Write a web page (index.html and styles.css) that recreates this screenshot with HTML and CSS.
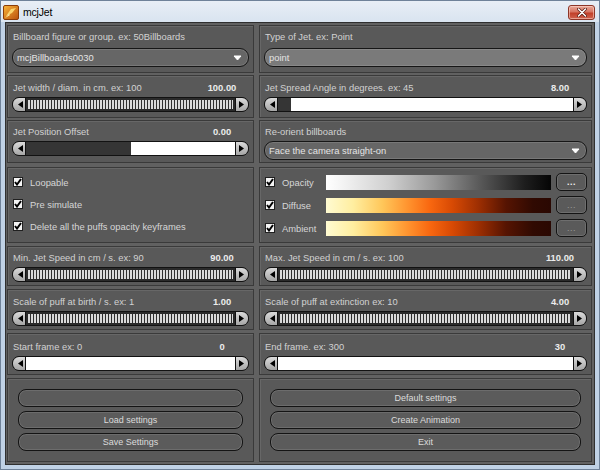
FILE: index.html
```html
<!DOCTYPE html>
<html>
<head>
<meta charset="utf-8">
<title>mcjJet</title>
<link rel="stylesheet" href="styles.css">
</head>
<body>
<div class="window">
  <div class="titlebar">
    <svg class="appicon" width="16" height="15" viewBox="0 0 16 15">
      <defs>
        <linearGradient id="ig" x1="0" y1="0" x2="1" y2="1">
          <stop offset="0" stop-color="#f9b53a"/>
          <stop offset="1" stop-color="#b9500c"/>
        </linearGradient>
      </defs>
      <rect x="0.5" y="0.5" width="15" height="14" rx="1.5" fill="url(#ig)" stroke="#8a3c08"/>
      <path d="M3 11 L8 4 L13 3 L9 8 Z" fill="#ffe27a" opacity="0.85"/>
      <path d="M2 13 L6 9 L7 10 Z" fill="#fff1b0"/>
    </svg>
    <span class="title">mcjJet</span>
    <div class="close">
      <svg width="10" height="9" viewBox="0 0 10 9"><path d="M1.5 1 L8.5 8 M8.5 1 L1.5 8" stroke="#5a1a10" stroke-width="3" stroke-linecap="round"/><path d="M1.5 1 L8.5 8 M8.5 1 L1.5 8" stroke="#ffffff" stroke-width="1.6" stroke-linecap="round"/></svg>
    </div>
  </div>

  <div class="content">
    <!-- Row 1 -->
    <div class="row r1">
      <div class="panel pad-drop">
        <div class="label"><span>Billboard figure or group. ex: 50Billboards</span></div>
        <div class="select"><span>mcjBillboards0030</span><svg class="arrow" width="9" height="6" viewBox="0 0 9 6"><path d="M1 1 H8 L4.5 5 Z" fill="#ffffff" stroke="#ffffff" stroke-linejoin="round"/></svg></div>
      </div>
      <div class="panel pad-drop">
        <div class="label"><span>Type of Jet. ex: Point</span></div>
        <div class="select light"><span>point</span><svg class="arrow" width="9" height="6" viewBox="0 0 9 6"><path d="M1 1 H8 L4.5 5 Z" fill="#ffffff" stroke="#ffffff" stroke-linejoin="round"/></svg></div>
      </div>
    </div>

    <!-- Row 2 -->
    <div class="row r2">
      <div class="panel pad6">
        <div class="label"><span>Jet width / diam. in cm. ex: 100</span><b class="val">100.00</b></div>
        <div class="slider"><span class="cap left"><svg width="5" height="7" viewBox="0 0 5 7"><path d="M5 0 V7 L0 3.5 Z" fill="#000"/></svg></span><span class="track ribbed"></span><span class="cap right"><svg width="5" height="7" viewBox="0 0 5 7"><path d="M0 0 V7 L5 3.5 Z" fill="#000"/></svg></span></div>
      </div>
      <div class="panel pad6">
        <div class="label"><span>Jet Spread Angle in degrees. ex: 45</span><b class="val">8.00</b></div>
        <div class="slider"><span class="cap left"><svg width="5" height="7" viewBox="0 0 5 7"><path d="M5 0 V7 L0 3.5 Z" fill="#000"/></svg></span><span class="track white"><span class="fill" style="width:13px"></span></span><span class="cap right"><svg width="5" height="7" viewBox="0 0 5 7"><path d="M0 0 V7 L5 3.5 Z" fill="#000"/></svg></span></div>
      </div>
    </div>

    <!-- Row 3 -->
    <div class="row r3">
      <div class="panel pad5">
        <div class="label"><span>Jet Position Offset</span><b class="val">0.00</b></div>
        <div class="slider"><span class="cap left"><svg width="5" height="7" viewBox="0 0 5 7"><path d="M5 0 V7 L0 3.5 Z" fill="#000"/></svg></span><span class="track white"><span class="fill" style="width:50%"></span></span><span class="cap right"><svg width="5" height="7" viewBox="0 0 5 7"><path d="M0 0 V7 L5 3.5 Z" fill="#000"/></svg></span></div>
      </div>
      <div class="panel pad5">
        <div class="label"><span>Re-orient billboards</span></div>
        <div class="select"><span>Face the camera straight-on</span><svg class="arrow" width="9" height="6" viewBox="0 0 9 6"><path d="M1 1 H8 L4.5 5 Z" fill="#ffffff" stroke="#ffffff" stroke-linejoin="round"/></svg></div>
      </div>
    </div>

    <!-- Row 4 -->
    <div class="row r4">
      <div class="panel checks">
        <div class="check"><span class="box"><svg width="8" height="8" viewBox="0 0 8 8"><path d="M1 4 L3 6.5 L7 1" fill="none" stroke="#000" stroke-width="2"/></svg></span><span>Loopable</span></div>
        <div class="check"><span class="box"><svg width="8" height="8" viewBox="0 0 8 8"><path d="M1 4 L3 6.5 L7 1" fill="none" stroke="#000" stroke-width="2"/></svg></span><span>Pre simulate</span></div>
        <div class="check"><span class="box"><svg width="8" height="8" viewBox="0 0 8 8"><path d="M1 4 L3 6.5 L7 1" fill="none" stroke="#000" stroke-width="2"/></svg></span><span>Delete all the puffs opacity keyframes</span></div>
      </div>
      <div class="panel ramps">
        <div class="ramp-row">
          <span class="box"><svg width="8" height="8" viewBox="0 0 8 8"><path d="M1 4 L3 6.5 L7 1" fill="none" stroke="#000" stroke-width="2"/></svg></span>
          <span class="rlabel">Opacity</span>
          <span class="bar opacity"></span>
          <span class="dots strong">...</span>
        </div>
        <div class="ramp-row">
          <span class="box"><svg width="8" height="8" viewBox="0 0 8 8"><path d="M1 4 L3 6.5 L7 1" fill="none" stroke="#000" stroke-width="2"/></svg></span>
          <span class="rlabel">Diffuse</span>
          <span class="bar fire"></span>
          <span class="dots">...</span>
        </div>
        <div class="ramp-row">
          <span class="box"><svg width="8" height="8" viewBox="0 0 8 8"><path d="M1 4 L3 6.5 L7 1" fill="none" stroke="#000" stroke-width="2"/></svg></span>
          <span class="rlabel">Ambient</span>
          <span class="bar fire"></span>
          <span class="dots">...</span>
        </div>
      </div>
    </div>

    <!-- Row 5 -->
    <div class="row r5">
      <div class="panel pad5">
        <div class="label"><span>Min. Jet Speed in cm / s. ex: 90</span><b class="val">90.00</b></div>
        <div class="slider"><span class="cap left"><svg width="5" height="7" viewBox="0 0 5 7"><path d="M5 0 V7 L0 3.5 Z" fill="#000"/></svg></span><span class="track ribbed"></span><span class="cap right"><svg width="5" height="7" viewBox="0 0 5 7"><path d="M0 0 V7 L5 3.5 Z" fill="#000"/></svg></span></div>
      </div>
      <div class="panel pad5">
        <div class="label"><span>Max. Jet Speed in cm / s. ex: 100</span><b class="val">110.00</b></div>
        <div class="slider"><span class="cap left"><svg width="5" height="7" viewBox="0 0 5 7"><path d="M5 0 V7 L0 3.5 Z" fill="#000"/></svg></span><span class="track ribbed"></span><span class="cap right"><svg width="5" height="7" viewBox="0 0 5 7"><path d="M0 0 V7 L5 3.5 Z" fill="#000"/></svg></span></div>
      </div>
    </div>

    <!-- Row 6 -->
    <div class="row r6">
      <div class="panel pad6">
        <div class="label"><span>Scale of puff at birth / s. ex: 1</span><b class="val">1.00</b></div>
        <div class="slider"><span class="cap left"><svg width="5" height="7" viewBox="0 0 5 7"><path d="M5 0 V7 L0 3.5 Z" fill="#000"/></svg></span><span class="track ribbed"></span><span class="cap right"><svg width="5" height="7" viewBox="0 0 5 7"><path d="M0 0 V7 L5 3.5 Z" fill="#000"/></svg></span></div>
      </div>
      <div class="panel pad6">
        <div class="label"><span>Scale of puff at extinction ex: 10</span><b class="val">4.00</b></div>
        <div class="slider"><span class="cap left"><svg width="5" height="7" viewBox="0 0 5 7"><path d="M5 0 V7 L0 3.5 Z" fill="#000"/></svg></span><span class="track ribbed"></span><span class="cap right"><svg width="5" height="7" viewBox="0 0 5 7"><path d="M0 0 V7 L5 3.5 Z" fill="#000"/></svg></span></div>
      </div>
    </div>

    <!-- Row 7 -->
    <div class="row r7">
      <div class="panel pad7">
        <div class="label"><span>Start frame ex: 0</span><b class="val">0</b></div>
        <div class="slider"><span class="cap left"><svg width="5" height="7" viewBox="0 0 5 7"><path d="M5 0 V7 L0 3.5 Z" fill="#000"/></svg></span><span class="track white"></span><span class="cap right"><svg width="5" height="7" viewBox="0 0 5 7"><path d="M0 0 V7 L5 3.5 Z" fill="#000"/></svg></span></div>
      </div>
      <div class="panel pad7">
        <div class="label"><span>End frame. ex: 300</span><b class="val">30</b></div>
        <div class="slider"><span class="cap left"><svg width="5" height="7" viewBox="0 0 5 7"><path d="M5 0 V7 L0 3.5 Z" fill="#000"/></svg></span><span class="track white"></span><span class="cap right"><svg width="5" height="7" viewBox="0 0 5 7"><path d="M0 0 V7 L5 3.5 Z" fill="#000"/></svg></span></div>
      </div>
    </div>

    <!-- Row 8 -->
    <div class="row r8">
      <div class="panel buttons">
        <div class="btn"></div>
        <div class="btn">Load settings</div>
        <div class="btn">Save Settings</div>
      </div>
      <div class="panel buttons">
        <div class="btn">Default settings</div>
        <div class="btn">Create Animation</div>
        <div class="btn">Exit</div>
      </div>
    </div>
  </div>
</div>
</body>
</html>
```

FILE: styles.css
```css
html, body {
  margin: 0;
  padding: 0;
  background: #ffffff;
}

.window {
  width: 600px;
  height: 470px;
  box-sizing: border-box;
  border: 1px solid #6f8299;
  background: #bfd1e5;
  display: flex;
  flex-direction: column;
  font-family: "Liberation Sans", Arial, sans-serif;
}

/* ---------- title bar ---------- */
.titlebar {
  height: 21px;
  flex: none;
  display: flex;
  align-items: center;
  padding: 0 4px 0 2px;
  background: linear-gradient(#e8eef6, #d9e4f0);
}

.appicon {
  flex: none;
  margin-top: 1px;
}

.title {
  margin-left: 4px;
  font-size: 10.5px;
  letter-spacing: -0.2px;
  color: #000000;
}

.close {
  margin-left: auto;
  width: 27px;
  height: 15px;
  margin-top: 1px;
  box-sizing: border-box;
  border: 1px solid #8d3527;
  border-radius: 3px;
  background: linear-gradient(#e9a898 0%, #d77563 45%, #c1402a 55%, #d0634f 100%);
  box-shadow: inset 0 0 0 1px rgba(255, 220, 210, 0.55);
  display: flex;
  align-items: center;
  justify-content: center;
}

/* ---------- content ---------- */
.content {
  flex: none;
  height: 443px;
  margin: 0 4px;
  box-sizing: border-box;
  border: 1px solid #2f2f2f;
  background: #616161;
  padding: 2px 2px 0 1px;
}

.row {
  display: grid;
  grid-template-columns: 247px 333px;
  column-gap: 5px;
}

.r1 { height: 48px; }
.r2 { height: 43px; margin-top: 2px; }
.r3 { height: 43px; margin-top: 2px; }
.r4 { height: 74px; margin-top: 4px; }
.r5 { height: 40px; margin-top: 5px; }
.r6 { height: 41px; margin-top: 3px; }
.r7 { height: 42px; margin-top: 3px; }
.r8 { height: 84px; margin-top: 3px; }

.panel {
  box-sizing: border-box;
  background: #595959;
  border: 1px solid #3a3a3a;
  box-shadow: inset 1px 1px 0 #676767;
  padding: 0 4px;
  display: flex;
  flex-direction: column;
}

.pad-drop { padding-top: 5px; }
.pad5 { padding-top: 5px; }
.pad6 { padding-top: 6px; }
.pad7 { padding-top: 7px; }

.label {
  height: 12px;
  line-height: 12px;
  font-size: 9.4px;
  color: #d2d2d2;
  display: flex;
  justify-content: space-between;
  padding-left: 1px;
  white-space: nowrap;
}

.val {
  width: 50px;
  margin-right: 2px;
  text-align: center;
  font-weight: bold;
  color: #ececec;
}

/* ---------- dropdown ---------- */
.select {
  margin-top: 5px;
  height: 19px;
  box-sizing: border-box;
  border: 1px solid #161616;
  border-radius: 9px;
  background: #666666;
  box-shadow: inset 0 0 0 1px #787878;
  display: flex;
  align-items: center;
  padding: 0 6px 0 4px;
  font-size: 9.4px;
  color: #e4e4e4;
}
.r3 .select { margin-top: 3px; }

.select.light {
  background: #7a7a7a;
  box-shadow: inset 0 0 0 1px #888888;
}

.select .arrow {
  margin-left: auto;
}

/* ---------- slider ---------- */
.slider {
  margin-top: 3px;
  height: 15px;
  box-sizing: border-box;
  border: 1px solid #121212;
  border-radius: 7px;
  background: #2c2c2c;
  overflow: hidden;
  display: flex;
}

.cap {
  flex: none;
  width: 13px;
  background: linear-gradient(#dadada, #a6a6a6);
  display: flex;
  align-items: center;
  justify-content: center;
}
.cap.left { border-right: 1px solid #111111; padding-left: 2px; box-sizing: border-box; }
.cap.right { border-left: 1px solid #111111; padding-right: 2px; box-sizing: border-box; }

.track {
  flex: 1;
  display: flex;
}

.track.ribbed {
  background-color: #2a2a2a;
  background-image: repeating-linear-gradient(90deg, #d9d9d9 0 2px, #2e2e2e 2px 3px);
  background-size: calc(100% - 4px) 9px;
  background-position: 2px 50%;
  background-repeat: no-repeat;
}

.track.white {
  background: #ffffff;
}

.fill {
  display: block;
  height: 100%;
  background: #353535;
}

/* ---------- checkboxes ---------- */
.checks {
  padding: 3px 5px 0 5px;
}

.check {
  height: 22px;
  display: flex;
  align-items: center;
  font-size: 9.4px;
  color: #d6d6d6;
  white-space: nowrap;
}

.box {
  flex: none;
  width: 10px;
  height: 10px;
  box-sizing: border-box;
  border: 1px solid #202020;
  background: #f4f4f4;
  display: flex;
  align-items: center;
  justify-content: center;
  margin-right: 7px;
}

.ramps {
  padding: 5px 4px 0 5px;
}

.ramp-row {
  height: 18px;
  margin-bottom: 5px;
  display: flex;
  align-items: center;
  font-size: 9.4px;
  color: #d6d6d6;
}

.rlabel {
  width: 44px;
  flex: none;
  white-space: nowrap;
}

.bar {
  flex: 1;
  height: 15px;
}

.bar.opacity {
  background: linear-gradient(90deg, #ffffff 0%, #f2f2f2 8%, #cfcfcf 28%, #9a9a9a 48%, #5a5a5a 68%, #1e1e1e 88%, #050505 100%);
}

.bar.fire {
  background: linear-gradient(90deg, #fffbd2 0%, #ffeea0 12%, #ffc75a 25%, #ff9530 36%, #f96810 46%, #d84a04 56%, #9c2e02 68%, #561402 80%, #300a02 92%, #2a0802 100%);
}

.dots {
  flex: none;
  width: 31px;
  height: 18px;
  margin-left: 5px;
  box-sizing: border-box;
  border: 1px solid #141414;
  border-radius: 5px;
  background: #5a5a5a;
  box-shadow: inset 0 0 0 1px #6e6e6e;
  display: flex;
  align-items: center;
  justify-content: center;
  font-size: 9px;
  color: #9a9a9a;
  letter-spacing: 0.5px;
}
.dots.strong {
  color: #f0f0f0;
  font-weight: bold;
}

/* ---------- buttons ---------- */
.buttons {
  padding: 10px 10px 0 10px;
}

.btn {
  height: 18px;
  margin-bottom: 4px;
  box-sizing: border-box;
  border: 1px solid #141414;
  border-radius: 8px;
  background: #5b5b5b;
  box-shadow: inset 0 0 0 1px #6c6c6c;
  display: flex;
  align-items: center;
  justify-content: center;
  font-size: 9px;
  color: #dcdcdc;
}
```
